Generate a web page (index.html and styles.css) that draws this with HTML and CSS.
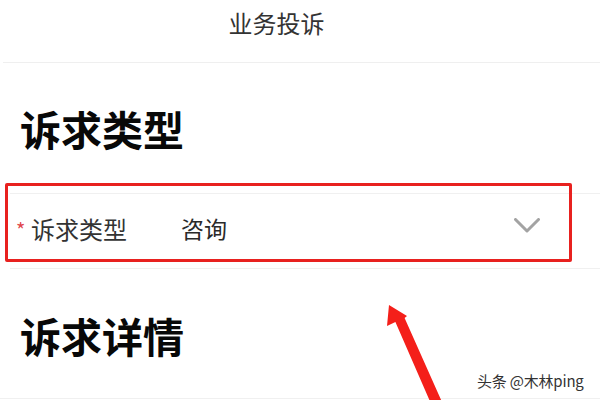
FILE: index.html
```html
<!DOCTYPE html>
<html lang="zh-CN">
<head>
<meta charset="utf-8">
<title>业务投诉</title>
<link rel="stylesheet" href="styles.css">
</head>
<body>
<div class="page">
  <header class="topbar">
    <h1 class="topbar-title">业务投诉</h1>
  </header>

  <section class="section section-type">
    <h2 class="section-title">诉求类型</h2>
  </section>

  <div class="field-row">
    <span class="required">*</span>
    <span class="field-label">诉求类型</span>
    <span class="field-value">咨询</span>
    <svg class="chevron" width="26" height="16" viewBox="0 0 26 16">
      <polyline points="1.5,1.5 13,13 24.5,1.5" fill="none" stroke="#a3a3a3" stroke-width="3" stroke-linecap="round" stroke-linejoin="round"/>
    </svg>
  </div>

  <section class="section section-detail">
    <h2 class="section-title">诉求详情</h2>
  </section>

  <div class="highlight-box"></div>

  <svg class="pointer-arrow" width="600" height="400" viewBox="0 0 600 400">
    <polygon points="389,305 407,316 404.6,318 442,402 432,406 395.4,322 387,326" fill="#f41f1a"/>
  </svg>

  <div class="watermark">头条 @木林ping</div>
</div>
</body>
</html>
```

FILE: styles.css
```css
* {
  box-sizing: border-box;
}

html, body {
  margin: 0;
  padding: 0;
  background: #ffffff;
}

body {
  font-family: "Noto Sans CJK SC", "Noto Sans", sans-serif;
  color: #222;
}

.page {
  position: relative;
  width: 600px;
  height: 400px;
  overflow: hidden;
  background: #fff;
}

.topbar {
  height: 63px;
  margin-left: 3px;
  border-bottom: 1px solid #efefef;
  display: flex;
  justify-content: center;
  padding-right: 50px;
}

.topbar-title {
  margin: 0;
  padding-top: 5px;
  font-size: 24px;
  font-weight: 400;
  line-height: 36px;
  color: #333;
}

.section {
  padding-left: 20px;
}

.section-type {
  height: 130px;
  padding-top: 45px;
}

.section-detail {
  height: 130px;
  padding-top: 46px;
  border-bottom: 1px solid #f0f0f0;
}

.section-title {
  margin: 0;
  font-size: 41px;
  font-weight: 700;
  line-height: 41px;
  color: #080808;
}

.field-row {
  height: 76px;
  margin-left: 10px;
  border-top: 1px solid #f0f0f0;
  border-bottom: 1px solid #f0f0f0;
  display: flex;
  align-items: center;
  padding-left: 6px;
  padding-right: 60px;
  padding-bottom: 6px;
}

.required {
  color: #e0474c;
  font-size: 20px;
  width: 15px;
  padding-top: 2px;
}

.field-label {
  font-size: 24px;
  color: #333;
  width: 150px;
}

.field-value {
  font-size: 23px;
  color: #2a2a2a;
  flex: 1;
}

.chevron {
  display: block;
  margin-top: -4px;
}

.highlight-box {
  position: absolute;
  left: 5px;
  top: 183px;
  width: 567px;
  height: 79px;
  border: 3px solid #e8211f;
  border-radius: 2px;
}

.pointer-arrow {
  position: absolute;
  left: 0;
  top: 0;
}

.watermark {
  position: absolute;
  left: 477px;
  top: 371px;
  font-size: 15px;
  line-height: 20px;
  color: #333;
  letter-spacing: -0.2px;
  text-shadow: 0 0 2px #fff;
}
```
